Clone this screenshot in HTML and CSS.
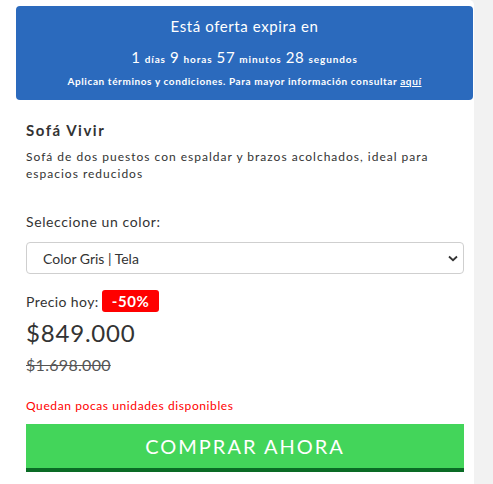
FILE: index.html
```html
<!DOCTYPE html>
<html lang="es">
<head>
<meta charset="utf-8">
<title>Sofá Vivir</title>
<link rel="stylesheet" href="styles.css">
</head>
<body>
<div class="card">
  <div class="offer">
    <div class="offer-title">Está oferta expira en</div>
    <div class="countdown">
      <span class="num">1</span> <span class="unit">días</span>
      <span class="num">9</span> <span class="unit">horas</span>
      <span class="num">57</span> <span class="unit">minutos</span>
      <span class="num">28</span> <span class="unit">segundos</span>
    </div>
    <div class="terms">Aplican términos y condiciones. Para mayor información consultar <a href="#">aquí</a></div>
  </div>
  <div class="content">
    <h1 class="title">Sofá Vivir</h1>
    <p class="desc">Sofá de dos puestos con espaldar y brazos acolchados, ideal para espacios reducidos</p>
    <label class="label" for="color">Seleccione un color:</label>
    <div class="select-wrap">
      <select id="color" class="select">
        <option>Color Gris | Tela</option>
      </select>
      <svg class="chev" width="10" height="7" viewBox="0 0 10 7"><path d="M1 1.5 L5 5.2 L9 1.5" fill="none" stroke="#333" stroke-width="1.8"/></svg>
    </div>
    <div class="price-row"><span class="price-label">Precio hoy:</span><span class="badge">-50%</span></div>
    <div class="price">$849.000</div>
    <div class="old-price">$1.698.000</div>
    <div class="stock">Quedan pocas unidades disponibles</div>
    <button class="buy">COMPRAR AHORA</button>
  </div>
</div>
</body>
</html>
```
FILE: styles.css
```css
html, body {
  margin: 0;
  padding: 0;
  background: #f2f2f2;
  font-family: Lato, "Open Sans", sans-serif;
  color: #333;
}
.card {
  width: 474px;
  height: 484px;
  background: #fff;
  border-top-right-radius: 5px;
  padding-top: 6px;
  box-sizing: border-box;
}
.offer {
  margin: 0 1px 0 16px;
  height: 94px;
  background: #2b6abd;
  border-radius: 4px;
  color: #fff;
  text-align: center;
  box-sizing: border-box;
  padding-top: 10px;
}
.offer-title {
  font-size: 15px;
  line-height: 20px;
  letter-spacing: 0.6px;
}
.countdown {
  margin-top: 11px;
  line-height: 20px;
}
.num {
  font-size: 15px;
  letter-spacing: 0.6px;
}
.unit {
  font-size: 10px;
  font-weight: bold;
  letter-spacing: 0.9px;
}
.terms {
  margin-top: 5px;
  font-size: 10px;
  font-weight: bold;
  letter-spacing: 0.6px;
  line-height: 14px;
}
.terms a {
  color: #fff;
}
.content {
  padding: 0 10px 0 26px;
}
.title {
  margin: 20px 0 0;
  font-size: 15px;
  line-height: 20px;
  font-weight: bold;
  letter-spacing: 1.5px;
  color: #333;
}
.desc {
  margin: 8px 0 0;
  font-size: 12px;
  line-height: 17px;
  letter-spacing: 1px;
  color: #333;
}
.label {
  display: block;
  margin-top: 30px;
  font-size: 14px;
  line-height: 20px;
  letter-spacing: 0.6px;
}
.select-wrap {
  position: relative;
  margin-top: 10px;
}
.select {
  display: block;
  width: 100%;
  height: 32px;
  border: 1px solid #cfcfcf;
  border-radius: 4px;
  background: #fff;
  font-family: Lato, sans-serif;
  font-size: 14px;
  color: #333;
  padding: 0 0 0 16px;
  appearance: none;
  -webkit-appearance: none;
}
.chev {
  position: absolute;
  right: 6px;
  top: 13px;
}
.price-row {
  margin-top: 16px;
  display: flex;
  align-items: center;
  height: 22px;
}
.price-label {
  font-size: 14px;
  letter-spacing: 0.4px;
  margin-right: 3px;
}
.badge {
  background: #ff0000;
  color: #fff;
  font-weight: bold;
  font-size: 15px;
  letter-spacing: 0.6px;
  border-radius: 3px;
  height: 22px;
  line-height: 22px;
  padding: 0 10px;
}
.price {
  margin-top: 7px;
  font-size: 24px;
  line-height: 28px;
  letter-spacing: 0.8px;
}
.old-price {
  margin-top: 9px;
  font-size: 16px;
  line-height: 18px;
  letter-spacing: 0.3px;
  color: #555;
  text-decoration: line-through;
}
.stock {
  margin-top: 24px;
  font-size: 12px;
  line-height: 16px;
  letter-spacing: 0.6px;
  color: #f00;
}
.buy {
  display: block;
  width: 100%;
  margin-top: 10px;
  height: 48px;
  border: 0;
  border-bottom: 4px solid #0a6b25;
  background: #43d55a;
  color: #fff;
  font-family: Lato, sans-serif;
  font-size: 20px;
  letter-spacing: 2px;
  padding: 0;
  box-sizing: border-box;
}
```
